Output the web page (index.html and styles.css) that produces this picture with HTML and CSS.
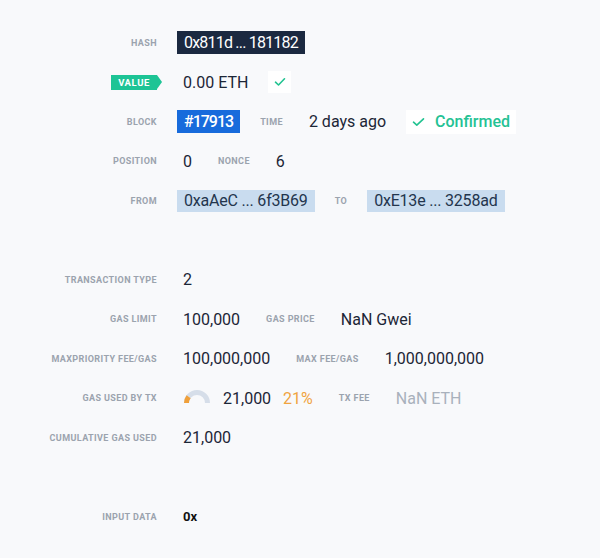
FILE: index.html
```html
<!DOCTYPE html>
<html>
<head>
<meta charset="utf-8">
<link rel="stylesheet" href="styles.css">
</head>
<body>
<div class="details">
  <div class="row">
    <div class="label">Hash</div>
    <div class="val box dark">0x811d ... 181182</div>
  </div>
  <div class="row">
    <div class="label"><span class="badge">Value</span></div>
    <div class="val">0.00 ETH</div>
    <div class="check-box">
      <svg width="12" height="10" viewBox="0 0 12 10"><path d="M1.5 5.2 L4.5 8 L10.5 1.8" fill="none" stroke="#22c391" stroke-width="1.6" stroke-linecap="round" stroke-linejoin="round"/></svg>
    </div>
  </div>
  <div class="row">
    <div class="label">Block</div>
    <div class="val box blue">#17913</div>
    <div class="label2">Time</div>
    <div class="val">2 days ago</div>
    <div class="status">
      <svg width="13" height="10" viewBox="0 0 13 10"><path d="M1.5 5.2 L4.8 8.2 L11.5 1.8" fill="none" stroke="#22c391" stroke-width="1.6" stroke-linecap="round" stroke-linejoin="round"/></svg>
      <span>Confirmed</span>
    </div>
  </div>
  <div class="row">
    <div class="label">Position</div>
    <div class="val">0</div>
    <div class="label2">Nonce</div>
    <div class="val">6</div>
  </div>
  <div class="row">
    <div class="label">From</div>
    <div class="val box light">0xaAeC ... 6f3B69</div>
    <div class="label2">To</div>
    <div class="val box light">0xE13e ... 3258ad</div>
  </div>
  <div class="spacer"></div>
  <div class="row">
    <div class="label">Transaction Type</div>
    <div class="val">2</div>
  </div>
  <div class="row">
    <div class="label">Gas Limit</div>
    <div class="val">100,000</div>
    <div class="label2">Gas Price</div>
    <div class="val">NaN Gwei</div>
  </div>
  <div class="row">
    <div class="label">MaxPriority Fee/Gas</div>
    <div class="val">100,000,000</div>
    <div class="label2">Max Fee/Gas</div>
    <div class="val">1,000,000,000</div>
  </div>
  <div class="row">
    <div class="label">Gas Used By Tx</div>
    <div class="val gas">
      <svg class="gauge" width="28" height="16" viewBox="0 0 28 16"><path d="M3.5 14 A10.5 10.5 0 0 1 24.5 14" fill="none" stroke="#d6dee9" stroke-width="5"/><path d="M3.5 14 A10.5 10.5 0 0 1 5.6 7.7" fill="none" stroke="#f0a03a" stroke-width="5"/></svg>
      <span>21,000</span>
      <span class="pct">21%</span>
    </div>
    <div class="label2">Tx Fee</div>
    <div class="val muted">NaN ETH</div>
  </div>
  <div class="row">
    <div class="label">Cumulative Gas Used</div>
    <div class="val">21,000</div>
  </div>
  <div class="spacer"></div>
  <div class="row">
    <div class="label">Input Data</div>
    <div class="val input">0x</div>
  </div>
</div>
</body>
</html>
```

FILE: styles.css
```css
html, body {
  margin: 0;
  padding: 0;
  background: #f8f9fb;
}
body {
  font-family: Roboto, "Liberation Sans", Arial, sans-serif;
  color: #1c2636;
  width: 600px;
  height: 558px;
  overflow: hidden;
}
.details {
  padding-top: 23px;
  display: flex;
  flex-direction: column;
}
.row {
  height: 39.5px;
  display: flex;
  align-items: center;
  gap: 20px;
}
.spacer {
  height: 39.5px;
}
.label, .label2 {
  font-size: 9px;
  font-weight: 700;
  letter-spacing: 0.4px;
  text-transform: uppercase;
  color: #9ba3ae;
  white-space: nowrap;
}
.label {
  width: 157px;
  text-align: right;
  flex: none;
}
.val {
  font-size: 16px;
  padding: 0 6px;
  line-height: 23px;
  height: 23px;
  white-space: nowrap;
}
.box.dark {
  background: #1b2940;
  color: #ffffff;
  padding: 0 7px;
  letter-spacing: -0.8px;
}
.box.blue {
  background: #176bdc;
  color: #ffffff;
  font-weight: 500;
  padding: 0 7px;
  letter-spacing: -1px;
}
.box.light {
  background: #c9dcef;
  color: #23354d;
  line-height: 22px;
  height: 22px;
  padding: 0 7px;
  letter-spacing: -0.2px;
}
.badge {
  display: inline-block;
  position: relative;
  background: #1dc495;
  color: #ffffff;
  font-size: 9.5px;
  letter-spacing: 0.6px;
  line-height: 15px;
  height: 15px;
  padding: 0 7px 0 7px;
  vertical-align: middle;
}
.badge::after {
  content: "";
  position: absolute;
  right: -5px;
  top: 0;
  border-left: 5px solid #1dc495;
  border-top: 7.5px solid transparent;
  border-bottom: 7.5px solid transparent;
}
.check-box {
  width: 23px;
  height: 22px;
  background: #ffffff;
  display: flex;
  align-items: center;
  justify-content: center;
  margin-left: -6px;
}
.status {
  display: flex;
  align-items: center;
  gap: 10px;
  background: #ffffff;
  height: 24px;
  padding: 0 6px 0 6px;
  font-size: 16px;
  font-weight: 500;
  color: #25c294;
  margin-left: -6px;
}
.gas {
  display: flex;
  align-items: center;
  gap: 12px;
}
.gauge {
  display: block;
  margin-top: -2px;
}
.pct {
  color: #f0a43f;
}
.muted {
  color: #a9b1bc;
}
.input {
  font-size: 13px;
  font-weight: 700;
  color: #111111;
}
```
